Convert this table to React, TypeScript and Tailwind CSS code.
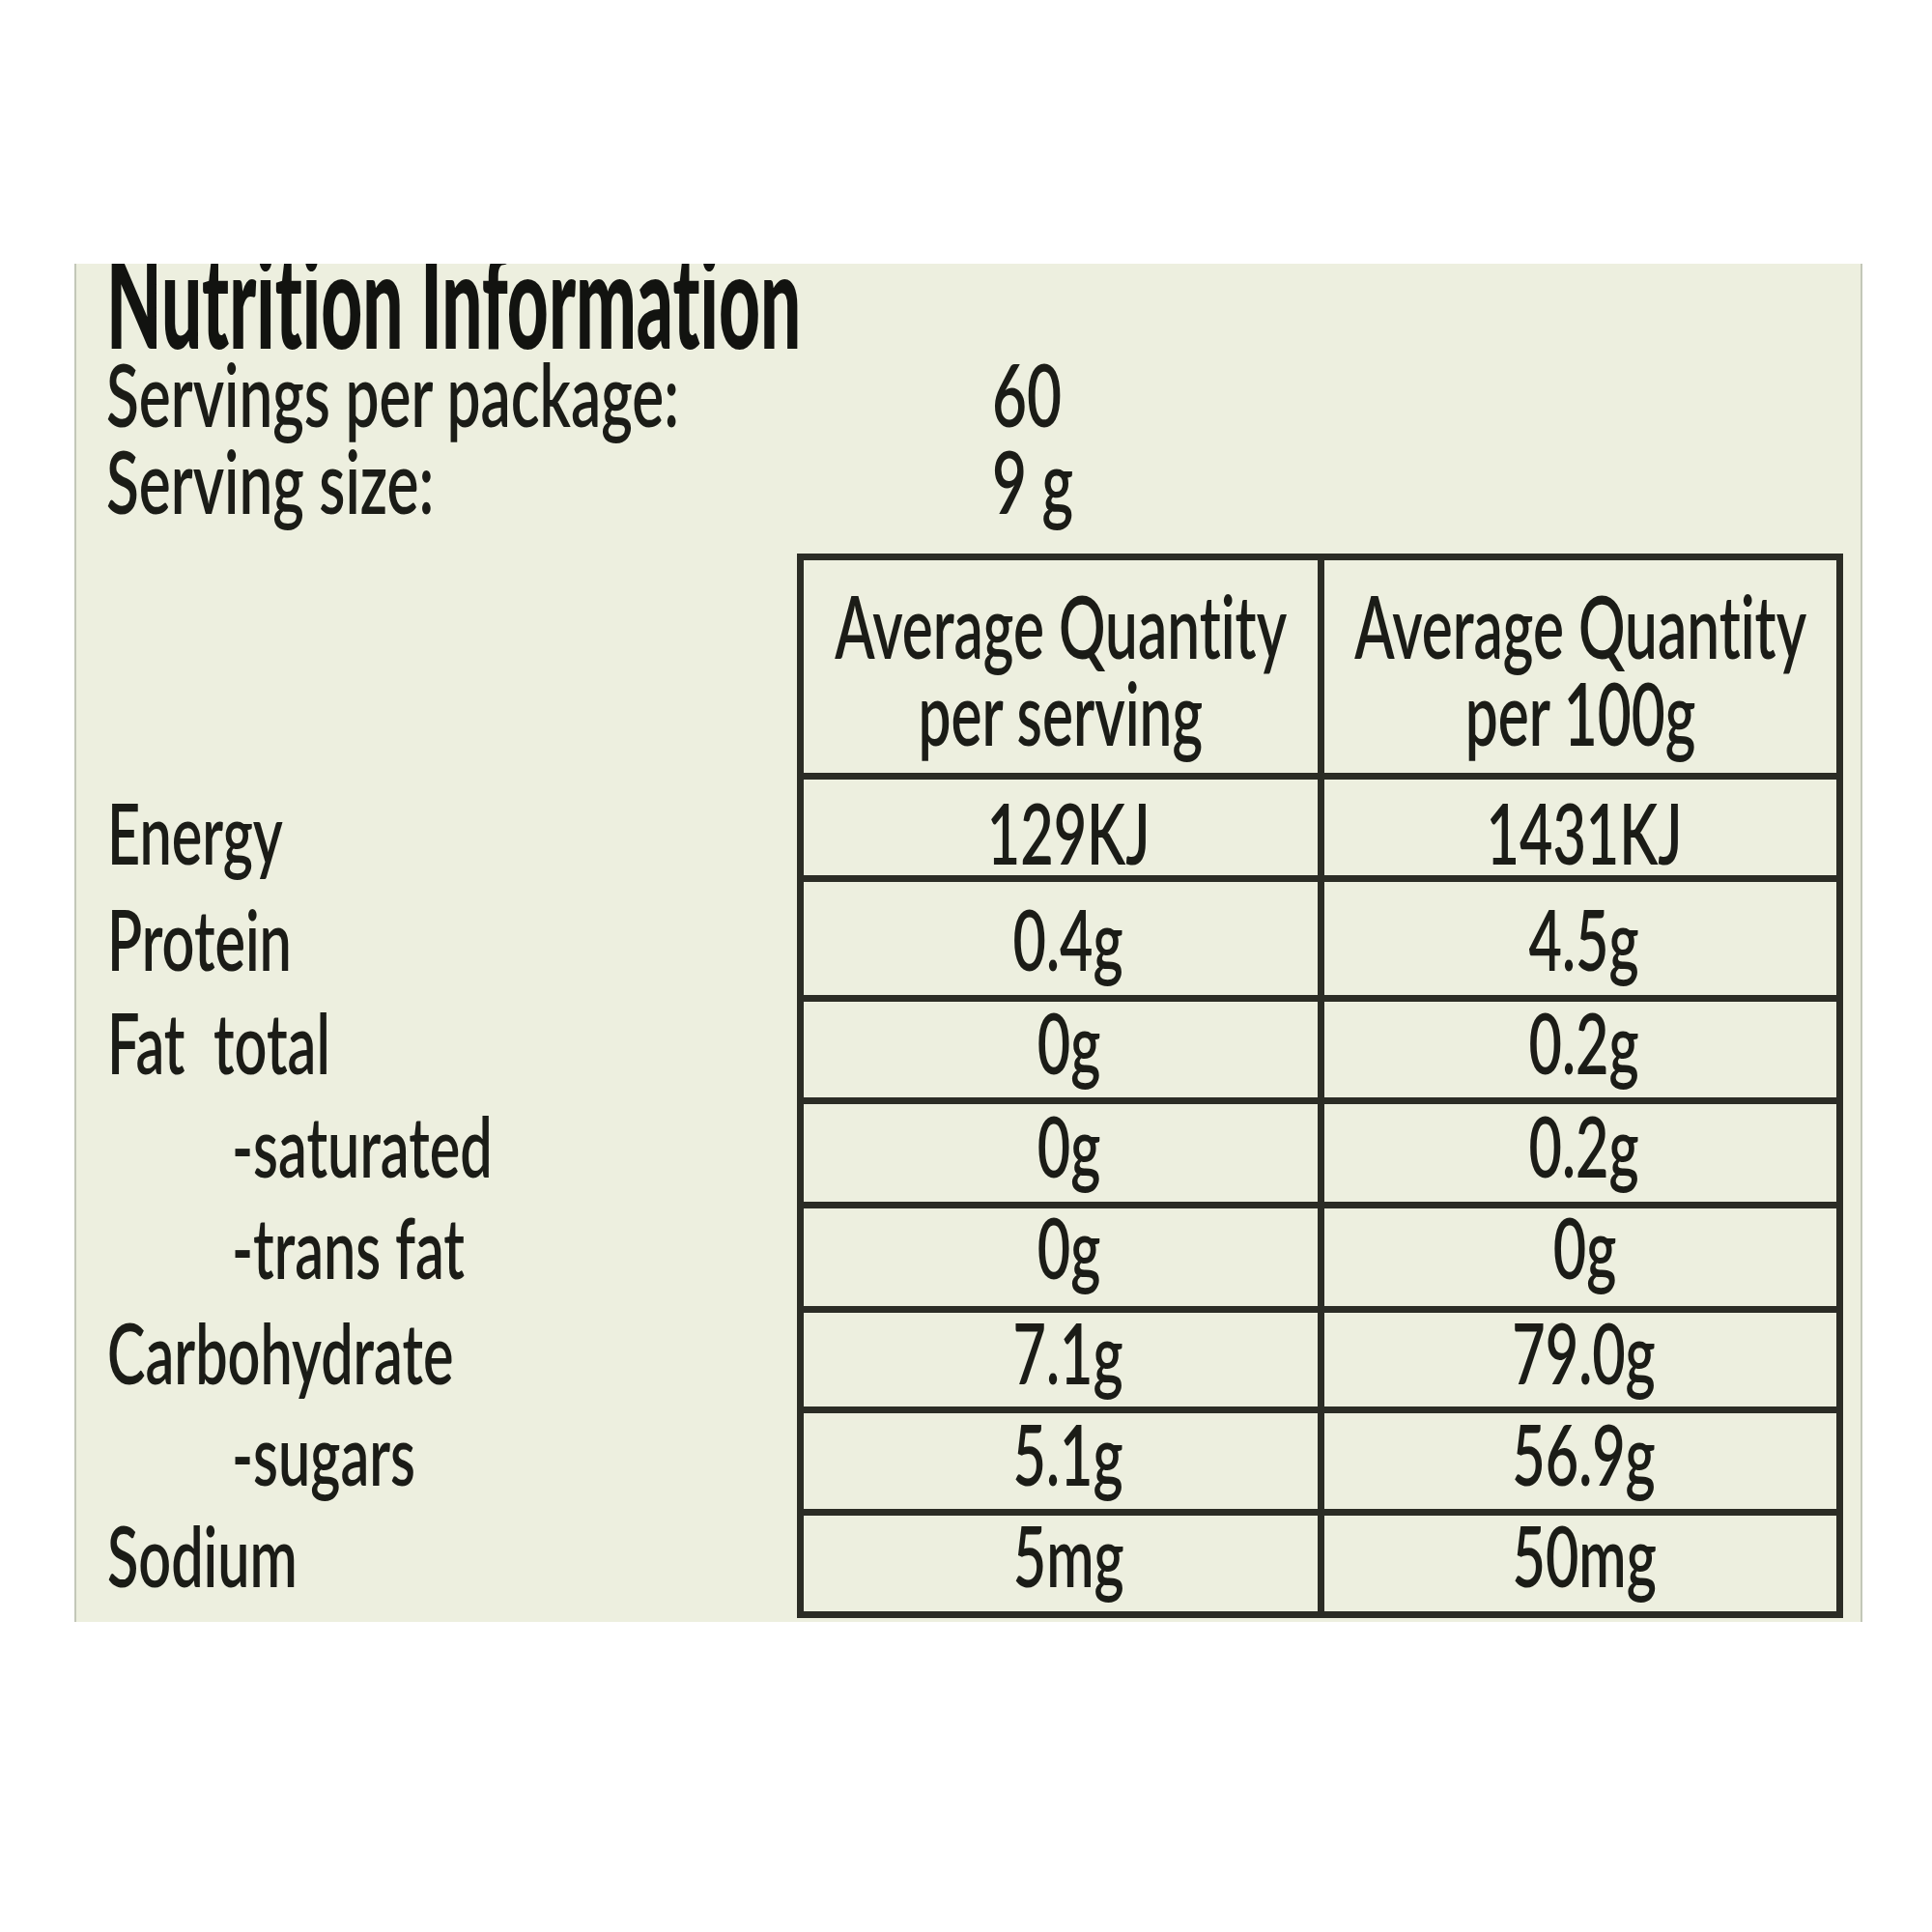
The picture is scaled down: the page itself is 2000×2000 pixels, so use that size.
const rows = [
  { label: "Energy", sub: false, a: "129KJ", b: "1431KJ", h: "h-[106px]", pad: "pt-[15px]" },
  { label: "Protein", sub: false, a: "0.4g", b: "4.5g", h: "h-[124px]", pad: "pt-[19px]" },
  { label: "Fat  total", sub: false, a: "0g", b: "0.2g", h: "h-[106px]", pad: "pt-[2px]" },
  { label: "-saturated", sub: true, a: "0g", b: "0.2g", h: "h-[108px]", pad: "pt-[3px]" },
  { label: "-trans fat", sub: true, a: "0g", b: "0g", h: "h-[108px]", pad: "pt-0" },
  { label: "Carbohydrate", sub: false, a: "7.1g", b: "79.0g", h: "h-[104px]", pad: "pt-[1px]" },
  { label: "-sugars", sub: true, a: "5.1g", b: "56.9g", h: "h-[106px]", pad: "pt-[2px]" },
  { label: "Sodium", sub: false, a: "5mg", b: "50mg", h: "h-[113px]", pad: "pt-[1px]" },
]

function Label({ text, sub, pad }: { text: string; sub: boolean; pad: string }) {
  return (
    <div className={`w-[746px] shrink-0 pt-[7px] ${sub ? "pl-[161px]" : "pl-[32px]"}`}>
      <div className={`${pad} h-[80px] text-[86px] leading-[80px] whitespace-pre`}>
        <span className="inline-block origin-left scale-x-[0.69]">{text}</span>
      </div>
    </div>
  )
}

function Value({ text, pad }: { text: string; pad: string }) {
  return (
    <div className={`${pad} h-[80px] flex justify-center text-[86px] leading-[80px] whitespace-nowrap`}>
      <span className="inline-block scale-x-[0.69]">{text}</span>
    </div>
  )
}

function HeaderCell({ top, bottom }: { top: string; bottom: string }) {
  return (
    <div className="pt-[22px] flex flex-col items-center text-[90px] leading-[90px] whitespace-nowrap">
      <span className="inline-block scale-x-[0.67]">{top}</span>
      <span className="inline-block scale-x-[0.67]">{bottom}</span>
    </div>
  )
}

export default function App() {
  return (
    <div className="w-[2000px] h-[2000px] bg-white pt-[273px] pl-[77px] font-['Lato',sans-serif] font-semibold text-[#1b1c17] [font-variant-ligatures:none]">
      <div className="w-[1851px] h-[1406px] overflow-hidden bg-[#edefdf] border-x-2 border-[#c3c7b8] flex flex-col">
        {/* Heading and servings */}
        <div className="h-[300px] shrink-0 pl-[31px]">
          <div className="-mt-[34px] h-[123px] text-[138px] leading-[138px] font-black whitespace-nowrap text-[#121310]">
            <span className="inline-block origin-left scale-x-[0.54]">Nutrition Information</span>
          </div>
          <div className="flex h-[90px] text-[90px] leading-[90px] whitespace-nowrap">
            <div className="w-[917px] shrink-0">
              <span className="inline-block origin-left scale-x-[0.69]">Servings per package:</span>
            </div>
            <span className="inline-block origin-left scale-x-[0.69]">60</span>
          </div>
          <div className="flex h-[90px] text-[90px] leading-[90px] whitespace-nowrap">
            <div className="w-[917px] shrink-0">
              <span className="inline-block origin-left scale-x-[0.69]">Serving size:</span>
            </div>
            <span className="inline-block origin-left scale-x-[0.69]">9 g</span>
          </div>
        </div>

        {/* Header row */}
        <div className="flex h-[227px] shrink-0">
          <div className="w-[746px] shrink-0" />
          <div className="w-[539px] shrink-0 border-t-[7px] border-l-[7px] border-[#2b2c25]">
            <HeaderCell top="Average Quantity" bottom="per serving" />
          </div>
          <div className="w-[544px] shrink-0 border-t-[7px] border-x-[7px] border-[#2b2c25]">
            <HeaderCell top="Average Quantity" bottom="per 100g" />
          </div>
        </div>

        {/* Nutrient rows */}
        {rows.map((row, i) => (
          <div key={row.label} className={`flex shrink-0 ${row.h}`}>
            <Label text={row.label} sub={row.sub} pad={row.pad} />
            <div
              className={`w-[539px] shrink-0 border-t-[7px] border-l-[7px] border-[#2b2c25] pl-[16px] ${
                i === rows.length - 1 ? "border-b-[7px]" : ""
              }`}
            >
              <Value text={row.a} pad={row.pad} />
            </div>
            <div
              className={`w-[544px] shrink-0 border-t-[7px] border-x-[7px] border-[#2b2c25] pl-[8px] ${
                i === rows.length - 1 ? "border-b-[7px]" : ""
              }`}
            >
              <Value text={row.b} pad={row.pad} />
            </div>
          </div>
        ))}
      </div>
    </div>
  )
}
